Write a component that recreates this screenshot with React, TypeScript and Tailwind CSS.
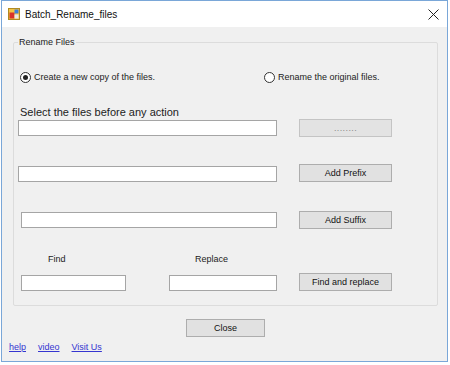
import { ReactNode } from 'react';

const font = { fontFamily: '"Liberation Sans", Arial, sans-serif' };

function TextBox({ className }: { className: string }) {
  return <div className={`h-[16px] bg-white border border-[#a5a5a5] ${className}`}></div>;
}

function WinButton({ children, disabled = false, className = '' }: { children: ReactNode; disabled?: boolean; className?: string }) {
  return (
    <div
      className={`w-[93px] h-[18px] flex items-center justify-center border text-[9px] leading-[12px] ${
        disabled ? 'text-[#8a8a8a] border-[#c4c4c4] bg-[#e3e3e3]' : 'text-[#111] border-[#adadad] bg-[#e1e1e1]'
      } ${className}`}
    >
      {children}
    </div>
  );
}

function Radio({ checked, label, className = '' }: { checked?: boolean; label: string; className?: string }) {
  return (
    <div className={`flex items-center gap-[3px] text-[9px] leading-[12px] text-[#222] ${className}`}>
      <div className="w-[11px] h-[11px] rounded-full border border-[#333] bg-white flex items-center justify-center">
        {checked && <div className="w-[5px] h-[5px] rounded-full bg-[#222]"></div>}
      </div>
      <span>{label}</span>
    </div>
  );
}

function AppIcon() {
  return (
    <svg width="12" height="12" viewBox="0 0 12 12">
      <rect x="0.5" y="0.5" width="11" height="11" fill="#f4c542" stroke="#b08a22" />
      <rect x="1.5" y="4.5" width="5" height="6" fill="#d9322b" />
      <rect x="6.5" y="1.5" width="4" height="4" fill="#3f7fd9" />
      <rect x="6.5" y="6.5" width="4" height="4" fill="#e9e9e9" />
    </svg>
  );
}

export default function App() {
  return (
    <div className="w-[450px] h-[365px] bg-white pl-[1px]" style={font}>
      <div className="w-[447px] h-[362px] border border-[#7aa7d8] flex flex-col">
        {/* title bar */}
        <div className="h-[26px] bg-white flex items-center pl-[6px] pr-[8px]">
          <AppIcon />
          <span className="ml-[5px] text-[10px] text-[#111]">Batch_Rename_files</span>
          <svg className="ml-auto" width="11" height="11" viewBox="0 0 11 11">
            <path d="M0.5 0.5 L10.5 10.5 M10.5 0.5 L0.5 10.5" stroke="#222" strokeWidth="1" />
          </svg>
        </div>

        <div className="flex-1 bg-[#f0f0f0] text-[9px] text-[#222]">
          <fieldset className="mt-[9px] ml-[11px] w-[425px] h-[270px] border border-[#dcdcdc] rounded-[2px] pl-[4px]">
            <legend className="px-[1px] text-[9px] leading-[12px] text-[#222]">Rename Files</legend>

            <div className="flex items-center mt-[23px] ml-[2px]">
              <Radio checked label="Create a new copy of the files." className="w-[244px]" />
              <Radio label="Rename the original files." />
            </div>

            <div className="mt-[22px] ml-[2px] text-[11px] leading-[14px] text-[#222]">Select the files before any action</div>

            <div className="flex items-start">
              <TextBox className="w-[259px] mt-[1px]" />
              <WinButton disabled className="ml-[22px]">
                <span className="tracking-[0.4px]">........</span>
              </WinButton>
            </div>

            <div className="flex items-start mt-[27px]">
              <TextBox className="w-[259px] mt-[2px]" />
              <WinButton className="ml-[22px]">Add Prefix</WinButton>
            </div>

            <div className="flex items-start mt-[29px]">
              <TextBox className="w-[256px] ml-[3px] mt-[1px]" />
              <WinButton className="ml-[22px]">Add Suffix</WinButton>
            </div>

            <div className="flex items-center mt-[23px] h-[14px] leading-[14px]">
              <span className="w-[151px] pl-[30px]">Find</span>
              <span className="pl-[26px]">Replace</span>
            </div>

            <div className="flex items-start mt-[7px]">
              <TextBox className="w-[105px] ml-[3px] mt-[2px]" />
              <TextBox className="w-[108px] ml-[43px] mt-[2px]" />
              <WinButton className="ml-[22px]">Find and replace</WinButton>
            </div>
          </fieldset>

          <div className="flex mt-[13px] ml-[184px]">
            <div className="w-[79px] h-[18px] flex items-center justify-center border border-[#adadad] bg-[#e1e1e1] text-[9px] leading-[12px] text-[#111]">
              Close
            </div>
          </div>

          <div className="flex gap-[12px] ml-[7px] mt-[4px] text-[9px] leading-[12px] text-[#3535d0] underline">
            <span>help</span>
            <span>video</span>
            <span>Visit Us</span>
          </div>
        </div>
      </div>
    </div>
  );
}
